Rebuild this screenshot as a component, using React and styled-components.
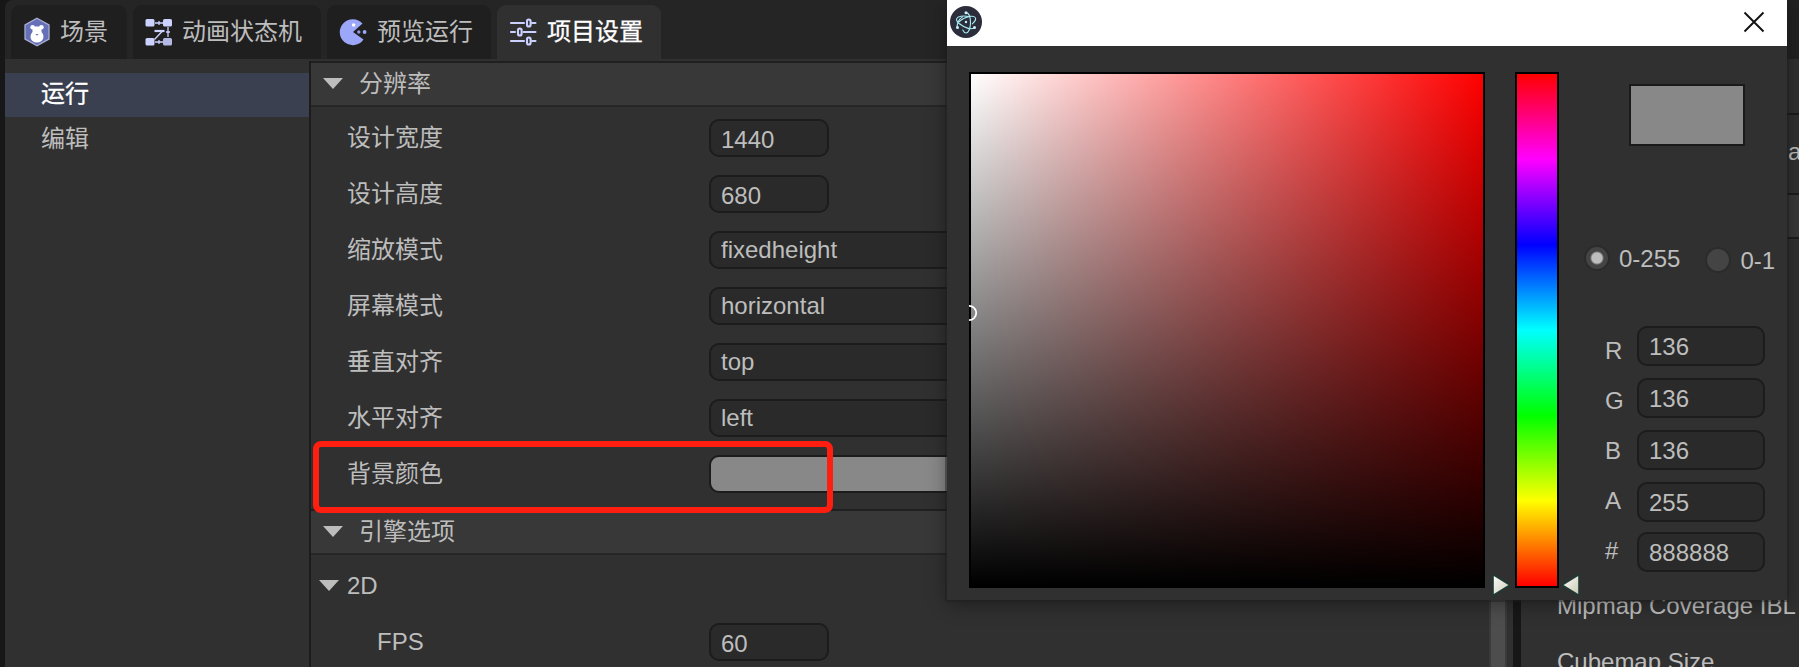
import React from "react";
import styled, { createGlobalStyle } from "styled-components";

const GlobalStyle = createGlobalStyle`
  * { box-sizing: border-box; }
  body {
    margin: 0;
    overflow: hidden;
    background: #1a1a1a;
    color: #bdbdbd;
    font-family: "Liberation Sans", "Noto Sans CJK SC", sans-serif;
    font-size: 24px;
    line-height: 28px;
  }
`;

const Page = styled.div`
  position: relative;
  display: flex;
  width: 1799px;
  height: 667px;
  padding-left: 5px;
  gap: 8px;
  overflow: hidden;
  background: #171717;
`;

const Dock = styled.div`
  display: flex;
  flex-direction: column;
  width: ${(p) => p.$width || "auto"};
  flex: ${(p) => (p.$width ? "none" : 1)};
  min-width: 0;
`;

const TabBar = styled.div`
  display: flex;
  flex: none;
  height: 59px;
  gap: 6px;
  padding: 5px 6px 0;
  background: #252525;
  border-top-left-radius: 8px;
`;

const Tab = styled.div`
  display: flex;
  align-items: center;
  gap: 9px;
  width: ${(p) => p.$width}px;
  padding-left: 12px;
  border-radius: 9px 9px 0 0;
  white-space: nowrap;
  background: ${(p) => (p.$active ? "#303030" : "#1f1f1f")};
  color: ${(p) => (p.$active ? "#ffffff" : "#bdbdbd")};
  -webkit-text-stroke: ${(p) => (p.$active ? "0.3px #ffffff" : "0")};
  svg { display: block; flex: none; }
`;

const Workspace = styled.div`
  display: flex;
  flex: 1;
  min-height: 0;
  background: #303030;
`;

const Sidebar = styled.div`
  width: 304px;
  padding-top: 14px;
`;

const NavItem = styled.div`
  height: 44px;
  padding: ${(p) => (p.$selected ? 7 : 8)}px 0 0 36px;
  background: ${(p) => (p.$selected ? "#3a4050" : "transparent")};
  color: ${(p) => (p.$selected ? "#ffffff" : "#bdbdbd")};
  -webkit-text-stroke: ${(p) => (p.$selected ? "0.3px #ffffff" : "0")};
`;

const Inspector = styled.div`
  flex: 1;
  margin-top: 2px;
  border-left: 2px solid #1c1c1c;
  overflow: hidden;
`;

const SectionHeader = styled.div`
  display: flex;
  align-items: center;
  gap: 16px;
  height: 46px;
  padding: 0 0 0 12px;
  border-top: 2px solid #202020;
  border-bottom: 2px solid #262626;
  background: #383838;
`;

const SectionBody = styled.div`
  padding: 3px 0 7px 36px;
`;

const PropertyRow = styled.div`
  display: flex;
  align-items: center;
  height: 56px;
`;

const PropertyLabel = styled.div`
  width: ${(p) => 362 - (p.$indent || 0)}px;
  margin-left: ${(p) => p.$indent || 0}px;
`;

const GroupRow = styled.div`
  display: flex;
  align-items: center;
  gap: 8px;
  height: 56px;
  margin-left: -28px;
`;

const Field = styled.div`
  width: ${(p) => p.$width};
  height: ${(p) => p.$height || 38}px;
  padding: ${(p) => p.$top || 3}px 0 0 10px;
  border: 2px solid #1c1c1c;
  border-radius: 10px;
  background: ${(p) => p.$fill || "#2a2a2a"};
  white-space: nowrap;
`;

const Arrow = styled.span`
  flex: none;
  width: 20px;
  height: 11px;
  margin-bottom: 1px;
  background: #bdbdbd;
  clip-path: polygon(0 0, 100% 0, 50% 100%);
`;

const ScrollTrack = styled.div`
  flex: none;
  width: 18px;
  margin-right: 6px;
  border: solid #3a3a3a;
  border-width: 0 2px;
  background: #4d4d4d;
`;

const SideTabBar = styled.div`
  flex: none;
  height: 59px;
  background: #222222;
`;

const SidePanel = styled.div`
  flex: 1;
  background: #303030;
  overflow: hidden;
`;

const SideRow = styled.div`
  height: ${(p) => p.$height}px;
  padding: ${(p) => p.$pad || "0"};
  border-bottom: ${(p) => (p.$line ? "2px solid #1c1c1c" : "none")};
  background: ${(p) => p.$fill || "transparent"};
  white-space: nowrap;
`;

const Highlight = styled.div`
  position: absolute;
  left: 313px;
  top: 441px;
  width: 520px;
  height: 72px;
  border: 6px solid #ff1e10;
  border-radius: 8px;
`;

const PickerWindow = styled.div`
  position: absolute;
  left: 947px;
  top: 0;
  width: 840px;
  height: 600px;
  background: #303030;
  box-shadow: 0 0 0 2px rgba(30, 30, 30, 0.45), 0 4px 18px rgba(0, 0, 0, 0.38);
`;

const TitleBar = styled.div`
  display: flex;
  align-items: center;
  justify-content: space-between;
  height: 46px;
  padding: 0 22px 2px 3px;
  background: #ffffff;
  svg { display: block; }
`;

const PickerBody = styled.div`
  display: flex;
  padding: 26px 0 0 22px;
`;

const ColorArea = styled.div`
  position: relative;
  width: 516px;
  height: 516px;
  border: 2px solid #000000;
  background:
    linear-gradient(to bottom, rgba(0, 0, 0, 0), #000000) padding-box,
    linear-gradient(to right, #ffffff, #ff0000) padding-box;
`;

const Marker = styled.svg`
  position: absolute;
  left: -2px;
  top: 230px;
`;

const HueSlider = styled.div`
  position: relative;
  width: 44px;
  height: 516px;
  margin-left: 30px;
  border: 2px solid #000000;
  background: linear-gradient(
    to bottom,
    #ff0000, #ff00ff, #0000ff, #00ffff, #00ff00, #ffff00, #ff0000
  ) padding-box;
`;

const HueHandle = styled.svg`
  position: absolute;
  top: 498px;
  ${(p) => (p.$side === "left" ? "left: -27px;" : "right: -25px;")}
`;

const Values = styled.div`
  width: 202px;
  margin-left: 24px;
  padding-top: 12px;
`;

const Swatch = styled.div`
  width: 116px;
  height: 62px;
  margin-left: 46px;
  border: 2px solid #1a1a1a;
  background: #888888;
`;

const RangeChoices = styled.div`
  display: flex;
  align-items: flex-start;
  height: 30px;
  margin: 98px 0 0 1px;
`;

const Choice = styled.label`
  display: flex;
  align-items: center;
  gap: 9px;
  width: ${(p) => p.$width}px;
  margin-top: ${(p) => p.$shift || 0}px;
  line-height: 30px;
  white-space: nowrap;
`;

const RadioDot = styled.span`
  width: 26px;
  height: 26px;
  margin-bottom: 2px;
  border: 2px solid #2b2b2b;
  border-radius: 50%;
  background: ${(p) =>
    p.$on
      ? "radial-gradient(circle, #bdbdbd 5px, #444444 7px)"
      : "#444444"};
`;

const Channels = styled.div`
  display: flex;
  margin: 52px 0 0 22px;
`;

const ChannelNames = styled.div`
  width: 32px;
  line-height: 50px;
`;

const ChannelFields = styled.div`
  display: flex;
  flex-direction: column;
  gap: 12px;
  & > :last-child { margin-top: -2px; }
`;

const SceneIcon = () => (
  <svg width="28" height="30" viewBox="0 0 28 30">
    <path d="M14 1.200 26 8v14L14 28.800 2 22V8Z" fill="#6670b8" stroke="#a9aed0" strokeWidth="1.300" />
    <circle cx="9.600" cy="10.300" r="2.300" fill="#fff" />
    <circle cx="18.400" cy="10.300" r="2.300" fill="#fff" />
    <path d="M9.500 9.500h9v5.500c3.500 3.500 2.500 10.500-4.500 10.500S6 18.500 9.500 15Z" fill="#fff" />
    <path d="M12.500 17h3l-1.500 1.800Z" fill="#6670b8" />
  </svg>
);

const StatesIcon = () => (
  <svg width="28" height="28" viewBox="0 0 28 28">
    <path d="M10 5h8M23 9v10M10 24h9M17 13.500 9.500 21.500M14 3v4M14 22v4M21 14h4" stroke="#ccd2ff" strokeWidth="1.300" fill="none" />
    <path d="M9.500 13h10" stroke="#ccd2ff" strokeWidth="2.200" />
    <rect x="0.500" y="1" width="9" height="7.500" rx="1.500" fill="#ccd2ff" />
    <rect x="18" y="1" width="9" height="7.500" rx="1.500" fill="#ccd2ff" />
    <rect x="0.500" y="20" width="9" height="7.500" rx="1.500" fill="#ccd2ff" />
    <rect x="18" y="20" width="9" height="7.500" rx="1.500" fill="#b3b9e4" />
  </svg>
);

const PreviewIcon = () => (
  <svg width="29" height="28" viewBox="0 0 29 28">
    <path d="M14 14 23.500 5.500A13 13 0 1 0 24.500 21.500Z" fill="#9ca7fa" />
    <circle cx="14.600" cy="7" r="1.800" fill="#fff" />
    <circle cx="19.800" cy="14" r="1.700" fill="#9098e8" />
    <circle cx="25.600" cy="14" r="1.900" fill="#9ca7fa" />
  </svg>
);

const SettingsIcon = () => (
  <svg width="29" height="28" viewBox="0 0 29 28" fill="none" stroke="#ccd2ff" strokeWidth="2.100" strokeLinecap="round">
    <path d="M2 5h13M23 5h3.500M2 14h4M14.500 14h12M2 23h13M23 23h3.500" />
    <rect x="18" y="1.500" width="3.600" height="7" rx="1.800" />
    <rect x="9" y="10.500" width="3.600" height="7" rx="1.800" />
    <rect x="18" y="19.500" width="3.600" height="7" rx="1.800" />
  </svg>
);

const AtomIcon = () => (
  <svg width="32" height="32" viewBox="0 0 32 32">
    <circle cx="16" cy="16" r="16" fill="#2b2e3a" />
    <g fill="none" stroke="#a9edf5" strokeWidth="1.100" strokeLinecap="round">
      <path d="M18.500 10.500C13 9.500 7.600 10.300 6.700 12.600c-.6 1.600.8 3.800 3.500 5.700" />
      <path d="M10.200 18.300c5 4 11.300 5.800 14.300 3.300" />
      <path d="M12.500 10.900c-3 2-5.300 5.900-5.400 10" />
      <path d="M22.300 17.800c2.800-2.400 3.900-4.900 2.900-6.300-.8-1.200-2.800-1.500-5.500-1.100-3.500.6-7.500 2.600-10.700 5.500" />
      <path d="M12.800 24c.9 2 2 3 3.200 3 2.500 0 4.500-4.500 4.500-10.500 0-4.500-1.200-8-3-9.500" />
    </g>
    <g fill="#c5f5fb">
      <circle cx="16" cy="16" r="1.200" />
      <circle cx="16" cy="6.700" r="1.500" />
      <circle cx="7.500" cy="21.600" r="1.500" />
      <circle cx="24.500" cy="21.600" r="1.500" />
    </g>
  </svg>
);

const CloseIcon = () => (
  <svg width="22" height="22" viewBox="0 0 22 22">
    <path d="M1.500 1.500 20.500 20.500M20.500 1.500 1.500 20.500" stroke="#111" strokeWidth="1.900" />
  </svg>
);

const Handle = ({ side }) => (
  <HueHandle $side={side} width="22" height="26" viewBox="0 0 22 26">
    <defs>
      <linearGradient id={`handle-${side}`} x1="0" y1="0" x2="1" y2="1">
        <stop offset="0" stopColor="#ffffff" />
        <stop offset="1" stopColor="#c9c9b0" />
      </linearGradient>
    </defs>
    <path
      d={side === "left" ? "M3 2.500 20 13 3 23.500Z" : "M19 2.500 2 13 19 23.500Z"}
      fill={`url(#handle-${side})`}
      stroke="#1f3a35"
      strokeWidth="1.600"
    />
  </HueHandle>
);

const tabs = [
  { label: "场景", Icon: SceneIcon, width: 116 },
  { label: "动画状态机", Icon: StatesIcon, width: 188 },
  { label: "预览运行", Icon: PreviewIcon, width: 164 },
  { label: "项目设置", Icon: SettingsIcon, width: 164, active: true },
];

const resolution = [
  { label: "设计宽度", value: "1440", number: true },
  { label: "设计高度", value: "680", number: true },
  { label: "缩放模式", value: "fixedheight" },
  { label: "屏幕模式", value: "horizontal" },
  { label: "垂直对齐", value: "top" },
  { label: "水平对齐", value: "left" },
  { label: "背景颜色", value: "", fill: "#888888" },
];

const channels = [
  ["R", "136"],
  ["G", "136"],
  ["B", "136"],
  ["A", "255"],
  ["#", "888888"],
];

export default function App() {
  return (
    <>
      <GlobalStyle />
      <Page>
        <Dock $width="1508px">
          <TabBar>
            {tabs.map(({ label, Icon, width, active }) => (
              <Tab key={label} $width={width} $active={active}>
                <Icon />
                {label}
              </Tab>
            ))}
          </TabBar>
          <Workspace>
            <Sidebar>
              <NavItem $selected>运行</NavItem>
              <NavItem>编辑</NavItem>
            </Sidebar>
            <Inspector>
              <SectionHeader><Arrow />分辨率</SectionHeader>
              <SectionBody>
                {resolution.map((r) => (
                  <PropertyRow key={r.label}>
                    <PropertyLabel>{r.label}</PropertyLabel>
                    <Field $width={r.number ? "120px" : "500px"} $top={r.number ? 5 : 3} $fill={r.fill}>
                      {r.value}
                    </Field>
                  </PropertyRow>
                ))}
              </SectionBody>
              <SectionHeader><Arrow />引擎选项</SectionHeader>
              <SectionBody>
                <GroupRow><Arrow />2D</GroupRow>
                <PropertyRow>
                  <PropertyLabel $indent={30}>FPS</PropertyLabel>
                  <Field $width="120px" $top={5}>60</Field>
                </PropertyRow>
              </SectionBody>
            </Inspector>
            <ScrollTrack />
          </Workspace>
        </Dock>
        <Dock>
          <SideTabBar />
          <SidePanel>
            <SideRow $height={56} $line />
            <SideRow $height={80} $line $pad="23px 0 0 267px">a</SideRow>
            <SideRow $height={44} $line $fill="#383838" />
            <SideRow $height={353} />
            <SideRow $height={56} $pad="0 0 0 36px">Mipmap Coverage IBL</SideRow>
            <SideRow $height={56} $pad="0 0 0 36px">Cubemap Size</SideRow>
          </SidePanel>
        </Dock>
        <Highlight />
        <PickerWindow>
          <TitleBar><AtomIcon /><CloseIcon /></TitleBar>
          <PickerBody>
            <ColorArea>
              <Marker width="9" height="18" viewBox="0 0 9 18">
                <circle cx="0" cy="9" r="7.200" fill="none" stroke="#fff" strokeWidth="1.800" />
              </Marker>
            </ColorArea>
            <HueSlider>
              <Handle side="left" />
              <Handle side="right" />
            </HueSlider>
            <Values>
              <Swatch />
              <RangeChoices>
                <Choice $width={122}><RadioDot $on />0-255</Choice>
                <Choice $width={80} $shift={2}><RadioDot />0-1</Choice>
              </RangeChoices>
              <Channels>
                <ChannelNames>
                  {channels.map(([name]) => <div key={name}>{name}</div>)}
                </ChannelNames>
                <ChannelFields>
                  {channels.map(([name, value]) => (
                    <Field key={name} $width="128px" $height={40} $top={5}>{value}</Field>
                  ))}
                </ChannelFields>
              </Channels>
            </Values>
          </PickerBody>
        </PickerWindow>
      </Page>
    </>
  );
}
